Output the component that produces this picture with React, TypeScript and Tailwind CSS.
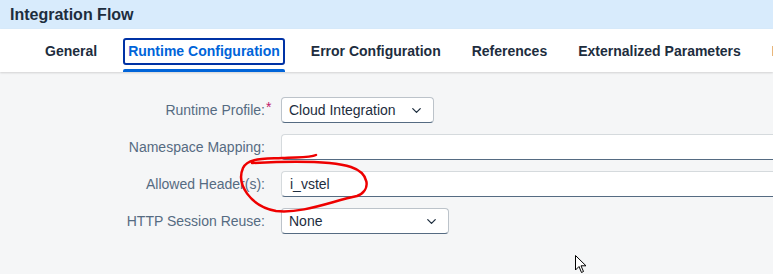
import { ChevronDown } from 'lucide-react'

const TABS = ['General', 'Runtime Configuration', 'Error Configuration', 'References', 'Externalized Parameters', 'Processing']

function Select({ value, width }: { value: string; width: string }) {
  return (
    <div
      className={`${width} h-[26px] flex items-center justify-between pl-[7px] pr-[9px] bg-white rounded-[4px] border border-[#bcc3ca] border-b-[#556b82] text-[14px] text-[#1d2d3e]`}
    >
      <span>{value}</span>
      <ChevronDown size={15} strokeWidth={2} className="text-[#1d2d3e]" />
    </div>
  )
}

function Input({ value }: { value?: string }) {
  return (
    <div className="flex-1 h-[26px] flex items-center pl-[8px] bg-white rounded-l-[4px] border border-r-0 border-[#d5dadd] border-b-[#556b82] text-[14px] text-[#1d2d3e]">
      {value}
    </div>
  )
}

function Row({ label, required, children }: { label: string; required?: boolean; children: React.ReactNode }) {
  return (
    <div className="flex items-center h-[26px]">
      <div className="relative w-[281px] pr-[16px] flex justify-end items-center text-[14px] text-[#556b82]">
        <span>{label}</span>
        {required && <span className="absolute left-[266px] -top-[3px] text-[#c0166a]">*</span>}
      </div>
      {children}
    </div>
  )
}

export default function App() {
  return (
    <div className="relative w-[773px] h-[274px] overflow-hidden bg-[#f5f6f7]" style={{ fontFamily: '"Liberation Sans", Arial, sans-serif' }}>
      {/* Title bar */}
      <div className="h-[29px] bg-[#d8ebfc] flex items-center pl-[10px]">
        <span className="text-[16px] font-bold text-[#1d2d3e]">Integration Flow</span>
      </div>

      {/* Tabs */}
      <div className="h-[43px] bg-white flex items-stretch pl-[40px] gap-[21px] pt-[2px] shadow-[0_1px_2px_rgba(0,0,0,0.15)] whitespace-nowrap">
        {TABS.map((tab, i) => (
          <div key={tab} className="relative flex items-center">
            <span
              className={
                i === 1
                  ? 'px-[3px] py-[1px] rounded-[3px] border-2 border-[#0032a5] text-[14px] font-bold text-[#0064d9]'
                  : 'px-[3px] py-[1px] border-2 border-transparent text-[14px] font-bold text-[#1d2d3e]'
              }
            >
              {tab}
            </span>
            {i === 1 && <div className="absolute left-0 right-0 bottom-0 h-[3px] bg-[#0064d9] rounded-t-[2px]" />}
          </div>
        ))}
      </div>

      {/* Form */}
      <div className="pt-[25px] flex flex-col gap-[11px]">
        <Row label="Runtime Profile:" required>
          <Select value="Cloud Integration" width="w-[153px]" />
        </Row>
        <Row label="Namespace Mapping:">
          <Input />
        </Row>
        <Row label="Allowed Header(s):">
          <Input value="i_vstel" />
        </Row>
        <Row label="HTTP Session Reuse:">
          <Select value="None" width="w-[168px]" />
        </Row>
      </div>

      {/* Red hand-drawn annotation */}
      <svg className="absolute left-0 top-0 pointer-events-none" width="773" height="274">
        <path
          d="M 316 155 C 310 158, 298 157, 282 158 C 262 159, 248 158, 243 168 C 236 184, 250 206, 276 211 C 302 214, 332 201, 357 196 C 372 190, 369 173, 351 167 C 336 162, 310 160, 252 163"
          fill="none"
          stroke="#ee0000"
          strokeWidth="2.5"
          strokeLinecap="round"
        />
      </svg>

      {/* Mouse cursor */}
      <svg className="absolute left-[575px] top-[255px]" width="14" height="20" viewBox="0 0 14 20">
        <path d="M 0.5 0.5 L 0.5 15 L 4 11.5 L 6.5 17.5 L 8.5 16.5 L 6 10.8 L 11 10.8 Z" fill="#fff" stroke="#000" strokeWidth="1" />
      </svg>
    </div>
  )
}
